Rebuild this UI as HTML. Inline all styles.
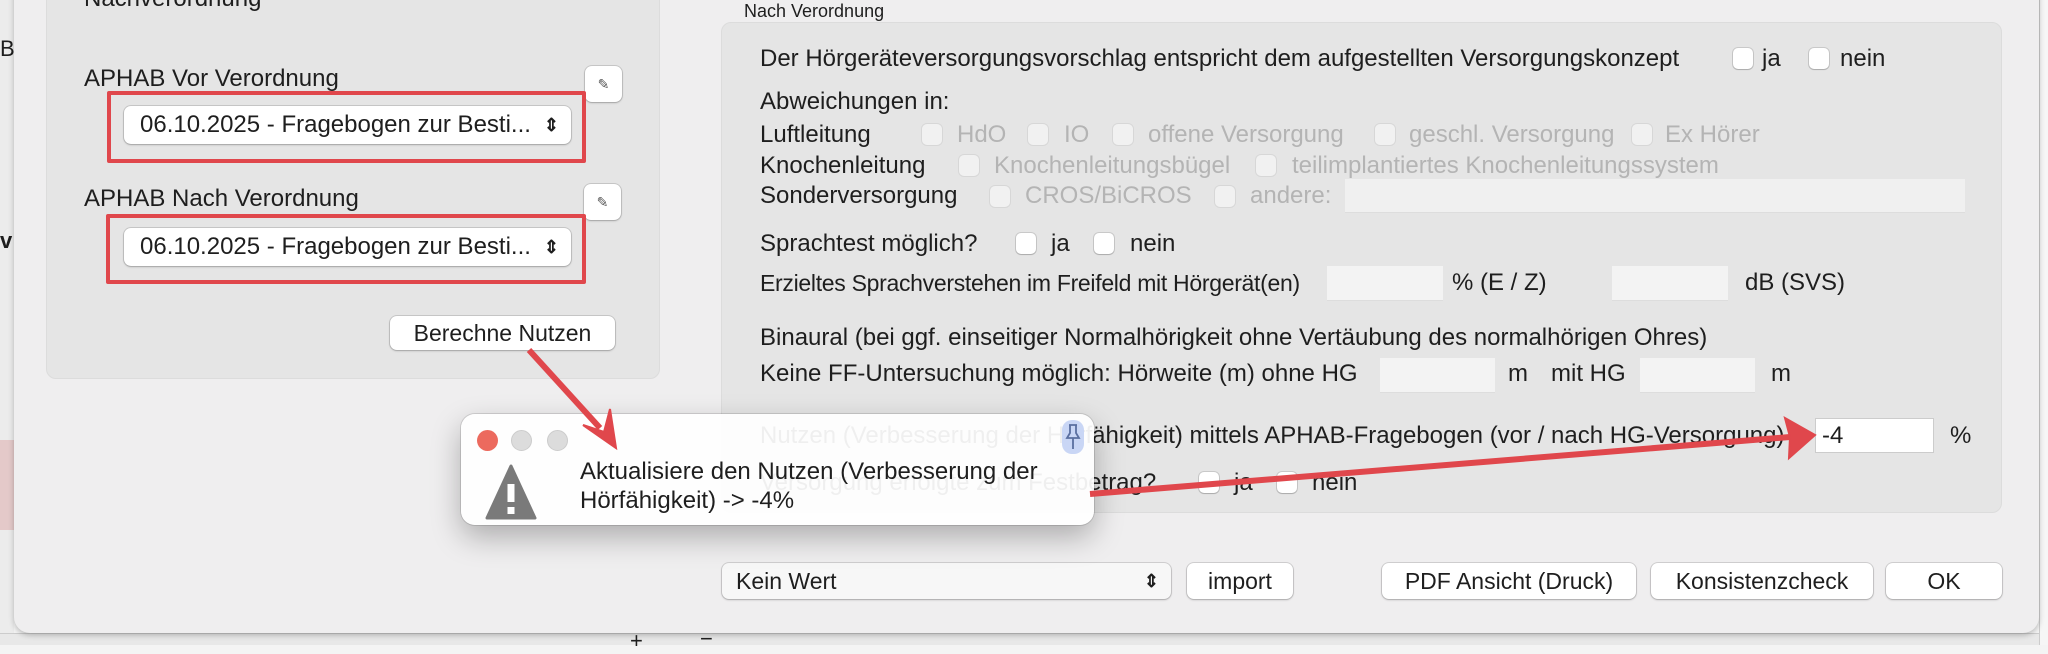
<!DOCTYPE html>
<html><head><meta charset="utf-8"><style>
*{box-sizing:border-box;margin:0;padding:0}
body{width:2048px;height:645px;overflow:hidden;background:#f4f4f4;font-family:"Liberation Sans",sans-serif;color:#1e1e1e;position:relative}
.a{position:absolute;white-space:nowrap}
.t{font-size:24px;line-height:26px}
.dis{color:#b4b4b4}
.cb{position:absolute;width:20px;height:21px;border-radius:5px;background:#fff;box-shadow:0 0 0 1px rgba(0,0,0,.12),0 1px 1px rgba(0,0,0,.15)}
.cb.d{background:#f1f1f1;box-shadow:0 0 0 1px rgba(0,0,0,.06)}
.in{position:absolute;background:#f3f3f3;border-bottom:1px solid #ddd}
.btn{position:absolute;background:#fff;border-radius:7px;box-shadow:0 0 0 1px rgba(0,0,0,.12),0 1px 2px rgba(0,0,0,.2);font-size:23px;text-align:center}
.arr{position:absolute;right:12px;top:0;font-size:18px;font-weight:bold}
</style></head><body>
<div class="a" style="left:0;top:0;width:14px;height:645px;background:#ececec"></div>
<div class="a" style="left:0;top:36px;font-size:22px">Be</div>
<div class="a" style="left:0;top:228px;font-size:22px;font-weight:bold">v</div>
<div class="a" style="left:0;top:440px;width:14px;height:90px;background:#e4c9c9"></div>
<div class="a" style="left:0;top:633px;width:2048px;height:12px;background:#e8e8e8;border-top:1px solid #ccc"></div>
<div class="a" style="left:630px;top:628px;font-size:22px">+</div>
<div class="a" style="left:700px;top:626px;font-size:22px">−</div>
<div class="a" style="left:2039px;top:0;width:9px;height:645px;background:#f6f6f6;border-left:1px solid #ccc"></div>

<div class="a" style="left:14px;top:-20px;width:2025px;height:653px;background:#efeeef;border-radius:0 0 16px 16px;box-shadow:0 2px 6px rgba(0,0,0,.25)"></div>

<div class="a" style="left:46px;top:-20px;width:614px;height:399px;background:#e5e5e5;border-radius:10px;border:1px solid #dcdcdc"></div>
<div class="a t" style="left:84px;top:-14px">Nachverordnung</div>
<div class="a t" style="left:84px;top:66px">APHAB Vor Verordnung</div>
<div class="a t" style="left:84px;top:186px">APHAB Nach Verordnung</div>
<div class="btn" style="left:585px;top:66px;width:37px;height:36px;font-size:14px;line-height:36px;color:#555">✎</div>
<div class="btn" style="left:584px;top:184px;width:37px;height:36px;font-size:14px;line-height:36px;color:#555">✎</div>
<div class="btn" style="left:124px;top:106px;width:447px;height:38px;text-align:left;padding-left:16px;line-height:38px;font-size:24px">06.10.2025 - Fragebogen zur Besti...<span class="arr">⇕</span></div>
<div class="btn" style="left:124px;top:228px;width:447px;height:38px;text-align:left;padding-left:16px;line-height:38px;font-size:24px">06.10.2025 - Fragebogen zur Besti...<span class="arr">⇕</span></div>
<div class="a" style="left:107px;top:91px;width:479px;height:72px;border:4px solid #e0474c;border-radius:2px"></div>
<div class="a" style="left:106px;top:214px;width:480px;height:70px;border:4px solid #e0474c;border-radius:2px"></div>
<div class="btn" style="left:390px;top:316px;width:225px;height:34px;line-height:34px">Berechne Nutzen</div>

<div class="a" style="left:744px;top:1px;font-size:18px">Nach Verordnung</div>
<div class="a" style="left:721px;top:22px;width:1281px;height:491px;background:#e5e5e5;border-radius:10px;border:1px solid #dcdcdc"></div>
<div class="a t" style="left:760px;top:46px">Der Hörgeräteversorgungsvorschlag entspricht dem aufgestellten Versorgungskonzept</div>
<div class="cb" style="left:1733px;top:48px"></div><div class="a t" style="left:1762px;top:46px">ja</div>
<div class="cb" style="left:1809px;top:48px"></div><div class="a t" style="left:1840px;top:46px">nein</div>
<div class="a t" style="left:760px;top:89px">Abweichungen in:</div>
<div class="a t" style="left:760px;top:122px">Luftleitung</div>
<div class="cb d" style="left:922px;top:124px"></div><div class="a t dis" style="left:957px;top:122px">HdO</div>
<div class="cb d" style="left:1028px;top:124px"></div><div class="a t dis" style="left:1064px;top:122px">IO</div>
<div class="cb d" style="left:1113px;top:124px"></div><div class="a t dis" style="left:1148px;top:122px">offene Versorgung</div>
<div class="cb d" style="left:1375px;top:124px"></div><div class="a t dis" style="left:1409px;top:122px">geschl. Versorgung</div>
<div class="cb d" style="left:1632px;top:124px"></div><div class="a t dis" style="left:1665px;top:122px">Ex Hörer</div>
<div class="a t" style="left:760px;top:153px">Knochenleitung</div>
<div class="cb d" style="left:959px;top:155px"></div><div class="a t dis" style="left:994px;top:153px">Knochenleitungsbügel</div>
<div class="cb d" style="left:1256px;top:155px"></div><div class="a t dis" style="left:1292px;top:153px">teilimplantiertes Knochenleitungssystem</div>
<div class="a t" style="left:760px;top:183px">Sonderversorgung</div>
<div class="cb d" style="left:990px;top:186px"></div><div class="a t dis" style="left:1025px;top:183px">CROS/BiCROS</div>
<div class="cb d" style="left:1215px;top:186px"></div><div class="a t dis" style="left:1250px;top:183px">andere:</div>
<div class="in" style="left:1345px;top:179px;width:620px;height:34px;background:#f0f0f0"></div>
<div class="a t" style="left:760px;top:231px">Sprachtest möglich?</div>
<div class="cb" style="left:1016px;top:233px"></div><div class="a t" style="left:1051px;top:231px">ja</div>
<div class="cb" style="left:1094px;top:233px"></div><div class="a t" style="left:1130px;top:231px">nein</div>
<div class="a t" style="left:760px;top:270px;font-size:23px;letter-spacing:-0.3px">Erzieltes Sprachverstehen im Freifeld mit Hörgerät(en)</div>
<div class="in" style="left:1327px;top:266px;width:116px;height:35px"></div>
<div class="a t" style="left:1452px;top:270px">% (E / Z)</div>
<div class="in" style="left:1612px;top:266px;width:116px;height:35px"></div>
<div class="a t" style="left:1745px;top:270px">dB (SVS)</div>
<div class="a t" style="left:760px;top:325px">Binaural (bei ggf. einseitiger Normalhörigkeit ohne Vertäubung des normalhörigen Ohres)</div>
<div class="a t" style="left:760px;top:361px">Keine FF-Untersuchung möglich: Hörweite (m) ohne HG</div>
<div class="in" style="left:1380px;top:358px;width:115px;height:35px"></div>
<div class="a t" style="left:1508px;top:361px">m</div>
<div class="a t" style="left:1551px;top:361px">mit HG</div>
<div class="in" style="left:1640px;top:358px;width:115px;height:35px"></div>
<div class="a t" style="left:1771px;top:361px">m</div>
<div class="a t" style="left:760px;top:423px">Nutzen (Verbesserung der Hörfähigkeit) mittels APHAB-Fragebogen (vor / nach HG-Versorgung)</div>
<div class="a" style="left:1815px;top:418px;width:119px;height:35px;background:#fff;border:1px solid #ccc;font-size:24px;line-height:33px;padding-left:6px">-4</div>
<div class="a t" style="left:1950px;top:423px">%</div>
<div class="a t" style="left:760px;top:470px">Versorgung erfolgte zum Festbetrag?</div>
<div class="cb" style="left:1199px;top:472px"></div><div class="a t" style="left:1234px;top:470px">ja</div>
<div class="cb" style="left:1277px;top:472px"></div><div class="a t" style="left:1312px;top:470px">nein</div>

<div class="btn" style="left:722px;top:563px;width:449px;height:36px;text-align:left;padding-left:14px;line-height:36px;background:#f7f7f7">Kein Wert<span class="arr">⇕</span></div>
<div class="btn" style="left:1187px;top:563px;width:106px;height:36px;line-height:36px">import</div>
<div class="btn" style="left:1382px;top:563px;width:254px;height:36px;line-height:36px">PDF Ansicht (Druck)</div>
<div class="btn" style="left:1651px;top:563px;width:222px;height:36px;line-height:36px">Konsistenzcheck</div>
<div class="btn" style="left:1886px;top:563px;width:116px;height:36px;line-height:36px">OK</div>

<div class="a" style="left:461px;top:414px;width:633px;height:111px;background:rgba(255,255,255,.93);border-radius:14px;box-shadow:0 0 0 1px rgba(0,0,0,.12),0 12px 30px rgba(0,0,0,.28)"></div>
<div class="a" style="left:477px;top:430px;width:21px;height:21px;border-radius:50%;background:#ec6a5e"></div>
<div class="a" style="left:511px;top:430px;width:21px;height:21px;border-radius:50%;background:#dcdcdc;border:1px solid #ccc"></div>
<div class="a" style="left:547px;top:430px;width:21px;height:21px;border-radius:50%;background:#dcdcdc;border:1px solid #ccc"></div>
<svg class="a" style="left:485px;top:464px" width="52" height="56" viewBox="0 0 52 56"><path d="M26 2 L50 54 L2 54 Z" fill="#7a7a7a" stroke="#7a7a7a" stroke-width="3" stroke-linejoin="round"/><rect x="22.5" y="20" width="7" height="18" fill="#fff"/><rect x="22.5" y="43" width="7" height="7" fill="#fff"/></svg>
<div class="a" style="left:1062px;top:420px;width:22px;height:34px;border-radius:10px;background:#c9d6f5"></div>
<svg class="a" style="left:1064px;top:423px" width="18" height="28" viewBox="0 0 18 28"><path d="M5 2h8M6 2v8l-3 5h12l-3-5V2M9 15v11" fill="none" stroke="#5a6fa0" stroke-width="1.8"/></svg>
<div class="a t" style="left:580px;top:457px;line-height:29px">Aktualisiere den Nutzen (Verbesserung der<br>Hörfähigkeit) -&gt; -4%</div>

<svg class="a" style="left:0;top:0" width="2048" height="645">
<g fill="#e0474c" stroke="#e0474c">
<line x1="529" y1="350" x2="600" y2="428" stroke-width="6"/>
<polygon points="616,448 583,425 604,432 610,409" stroke-width="2"/>
<line x1="1090" y1="494" x2="1790" y2="437" stroke-width="6"/>
<polygon points="1815,435 1785,418 1790,437 1789,458" stroke-width="2"/>
</g></svg>
</body></html>
